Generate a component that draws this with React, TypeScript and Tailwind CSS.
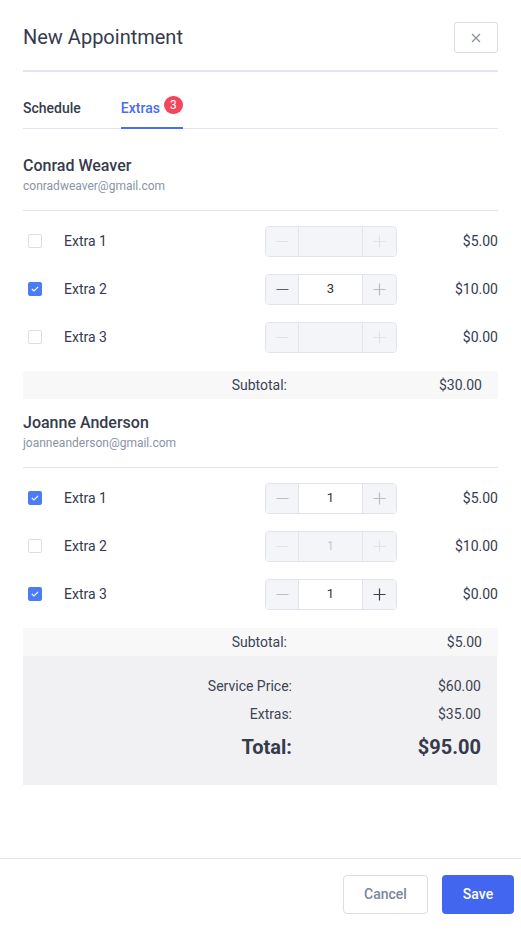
import React from "react";

type Extra = { name: string; checked: boolean; qty: string; price: string; disabled: boolean; minusDark?: boolean; plusDark?: boolean };

const conrad: Extra[] = [
  { name: "Extra 1", checked: false, qty: "", price: "$5.00", disabled: true },
  { name: "Extra 2", checked: true, qty: "3", price: "$10.00", disabled: false, minusDark: true },
  { name: "Extra 3", checked: false, qty: "", price: "$0.00", disabled: true },
];

const joanne: Extra[] = [
  { name: "Extra 1", checked: true, qty: "1", price: "$5.00", disabled: false },
  { name: "Extra 2", checked: false, qty: "1", price: "$10.00", disabled: true },
  { name: "Extra 3", checked: true, qty: "1", price: "$0.00", disabled: false, plusDark: true },
];

function Minus({ className }: { className: string }) {
  return (
    <svg width="13" height="13" viewBox="0 0 13 13" className={className}>
      <line x1="0.5" y1="6.5" x2="12.5" y2="6.5" stroke="currentColor" strokeWidth="1.2" />
    </svg>
  );
}

function Plus({ className }: { className: string }) {
  return (
    <svg width="13" height="13" viewBox="0 0 13 13" className={className}>
      <line x1="0.5" y1="6.5" x2="12.5" y2="6.5" stroke="currentColor" strokeWidth="1.2" />
      <line x1="6.5" y1="0.5" x2="6.5" y2="12.5" stroke="currentColor" strokeWidth="1.2" />
    </svg>
  );
}

function Checkbox({ checked }: { checked: boolean }) {
  if (checked) {
    return (
      <span className="flex h-[14px] w-[14px] items-center justify-center rounded-[2px] bg-[#4b7cf5]">
        <svg width="8" height="6" viewBox="0 0 8 6">
          <path d="M0.8 3 L3 5 L7.2 0.8" fill="none" stroke="white" strokeWidth="1.1" />
        </svg>
      </span>
    );
  }
  return <span className="block h-[14px] w-[14px] rounded-[2px] border border-[#dcdee6] bg-white" />;
}

function Stepper({ e }: { e: Extra }) {
  return (
    <div className="flex h-[31px] w-[132px] overflow-hidden rounded-[4px] border border-[#e2e4eb]">
      <div className="flex w-[33px] items-center justify-center border-r border-[#e2e4eb] bg-[#f4f5f8]">
        <Minus className={e.disabled ? "text-[#e0e2e8]" : e.minusDark ? "text-[#5a5f6b]" : "text-[#b9bcc4]"} />
      </div>
      <div className={`flex flex-1 items-center justify-center text-[13px] ${e.disabled ? "bg-[#f4f5f8] text-[#c8cbd2]" : "bg-white text-[#333]"}`}>
        {e.qty}
      </div>
      <div className="flex w-[34px] items-center justify-center border-l border-[#e2e4eb] bg-[#f4f5f8]">
        <Plus className={e.disabled ? "text-[#e0e2e8]" : e.plusDark ? "text-[#3c404a]" : "text-[#b9bcc4]"} />
      </div>
    </div>
  );
}

function Customer({ name, email, extras, subtotal }: { name: string; email: string; extras: Extra[]; subtotal: string }) {
  return (
    <div>
      <div className="text-[16px] font-medium leading-[24px] text-[#353b4d]">{name}</div>
      <div className="text-[12px] leading-[16px] text-[#8a93a7]">{email}</div>
      <div className="mt-[16px] h-px bg-[#e3e5ec]" />
      <div className="pt-[6px] pb-[10px]">
        {extras.map((e) => (
          <div key={e.name} className="flex h-[48px] items-center">
            <div className="ml-[5px] w-[36px]">
              <Checkbox checked={e.checked} />
            </div>
            <div className="flex-1 text-[14px] text-[#353b4d]">{e.name}</div>
            <Stepper e={e} />
            <div className="w-[101px] text-right text-[14px] text-[#353b4d]">{e.price}</div>
          </div>
        ))}
      </div>
      <div className="flex h-[28px] items-center justify-end bg-[#f8f8f8] pr-[16px] text-[14px] text-[#3d4354]">
        <span>Subtotal:</span>
        <span className="w-[195px] text-right">{subtotal}</span>
      </div>
    </div>
  );
}

export default function App() {
  return (
    <div className="flex h-[930px] w-[521px] flex-col bg-white font-['Roboto',sans-serif] text-[#353b4d]">
      <div className="px-[23px] pt-[22px]">
        <div className="flex items-center justify-between">
          <h1 className="text-[20px] leading-[31px]">New Appointment</h1>
          <button className="flex h-[31px] w-[44px] items-center justify-center rounded-[3px] border border-[#dcdee6] text-[#8a90a0]">
            <svg width="10" height="10" viewBox="0 0 10 10">
              <path d="M1 1 L9 9 M9 1 L1 9" stroke="currentColor" strokeWidth="1.2" />
            </svg>
          </button>
        </div>
        <div className="mt-[17px] h-[2px] bg-[#e2e4ee]" />

        <div className="mt-[26px] flex gap-[40px] border-b border-[#e2e4ee] text-[14px] font-medium">
          <div className="pb-[9px] leading-[20px] text-[#353b4d]">Schedule</div>
          <div className="-mb-px flex items-start border-b-2 border-[#4a6cf4] pb-[9px] leading-[20px] text-[#4a6cf4]">
            <span>Extras</span>
            <span className="relative -top-[2px] ml-[4px] flex h-[18px] w-[19px] items-center justify-center rounded-full bg-[#f5455c] text-[12px] leading-none font-normal text-white">
              3
            </span>
          </div>
        </div>

        <div className="mt-[25px]">
          <Customer name="Conrad Weaver" email="conradweaver@gmail.com" extras={conrad} subtotal="$30.00" />
        </div>
        <div className="mt-[12px]">
          <Customer name="Joanne Anderson" email="joanneanderson@gmail.com" extras={joanne} subtotal="$5.00" />
        </div>

        <div className="mr-px bg-[#f1f1f3] pt-[16px] pb-[19px] pr-[16px] text-[#3d4354]">
          <div className="flex h-[28px] items-center justify-end text-[14px]">
            <span>Service Price:</span>
            <span className="w-[189px] text-right">$60.00</span>
          </div>
          <div className="flex h-[28px] items-center justify-end text-[14px]">
            <span>Extras:</span>
            <span className="w-[189px] text-right">$35.00</span>
          </div>
          <div className="flex h-[38px] items-center justify-end text-[20px] font-bold text-[#353b4d]">
            <span>Total:</span>
            <span className="w-[189px] text-right">$95.00</span>
          </div>
        </div>
      </div>

      <div className="mt-auto flex h-[72px] justify-end gap-[14px] border-t border-[#e3e5ec] pt-[16px] pr-[7px]">
        <button className="h-[39px] w-[85px] rounded-[4px] border border-[#dcdee6] bg-white text-[14px] font-medium text-[#7d869c]">
          Cancel
        </button>
        <button className="h-[39px] w-[72px] rounded-[4px] bg-[#4266f0] text-[14px] font-medium text-white">Save</button>
      </div>
    </div>
  );
}
